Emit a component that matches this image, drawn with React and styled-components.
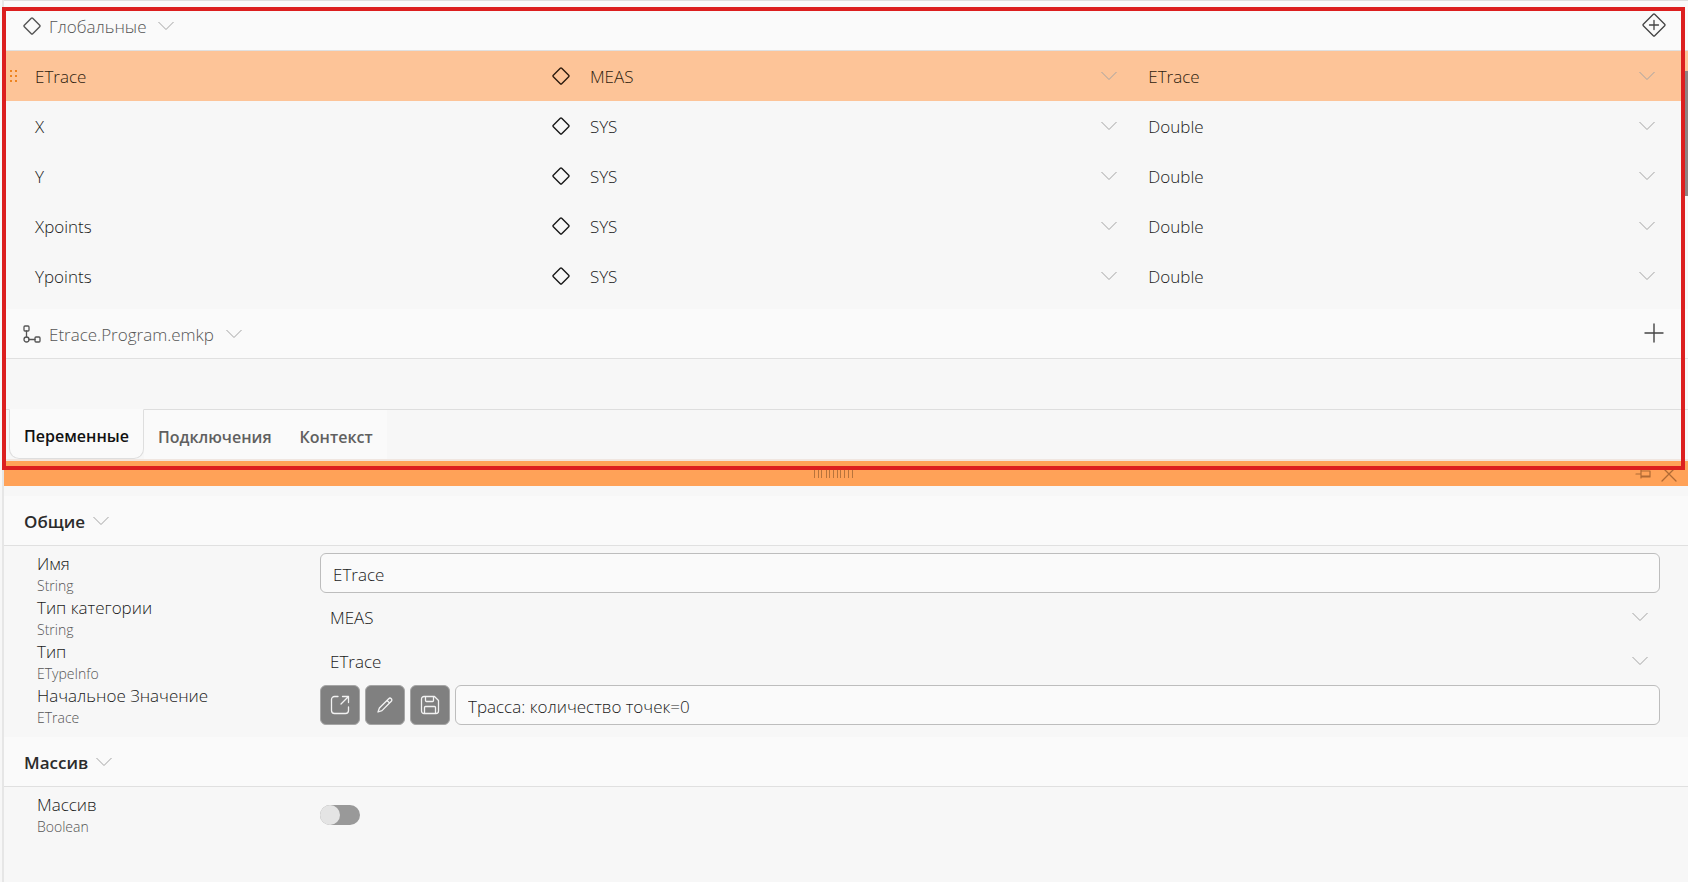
import React, { useState } from 'react';
import styled, { createGlobalStyle, css } from 'styled-components';

const GlobalStyle = createGlobalStyle`
  * {
    box-sizing: border-box;
  }
  body {
    margin: 0;
    background: #f7f7f7;
    color: #1a1a1a;
    font-family: 'Open Sans', 'Noto Sans', sans-serif;
    font-size: 17px;
    font-weight: 300;
    line-height: 24px;
  }
  button, input, select {
    font: inherit;
    color: inherit;
  }
`;

const Shell = styled.div`
  min-height: 100vh;
  margin-left: 2px;
  border-left: 2px solid #e6e6e6;
`;

const TopPanel = styled.section`
  position: relative;
  border-top: 1px solid #dedede;
`;

// annotation frame drawn over the variables panel and the splitter
const Highlight = styled.div`
  position: absolute;
  top: 6px;
  right: 3px;
  bottom: -9px;
  left: -2px;
  z-index: 2;
  border: 4px solid #dc1f1f;
  pointer-events: none;
`;

const ScrollThumb = styled.div`
  position: absolute;
  top: 70px;
  right: 0;
  width: 3px;
  height: 125px;
  background: #8f8282;
`;

const GroupHeader = styled.header`
  display: flex;
  align-items: center;
  justify-content: space-between;
  height: 50px;
  padding: 0 22px 0 19px;
  background: #fafafa;
  border-bottom: 1px solid #e0e0e0;
`;

const GroupToggle = styled.button`
  display: flex;
  align-items: center;
  padding: 0;
  border: 0;
  background: none;
  color: ${(props) => (props.$strong ? '#2b2b2b' : '#555')};
  font-weight: ${(props) => (props.$strong ? 600 : 300)};
  cursor: pointer;

  span {
    margin: ${(props) => (props.$strong ? '2px 8px 0 1px' : '2px 12px 0 8px')};
  }
`;

const IconButton = styled.button`
  display: flex;
  justify-content: center;
  padding: 0;
  border: 0;
  background: none;
  color: #444;
  cursor: pointer;

  ${GroupHeader} & {
    width: 24px;
    margin-bottom: 2px;
  }
`;

const VariableTable = styled.table`
  width: 100%;
  margin-bottom: 8px;
  border-collapse: collapse;
  table-layout: fixed;

  td {
    height: 50px;
    padding: 0;
  }
`;

const VariableRow = styled.tr`
  ${(props) =>
    props.$selected &&
    css`
      background: #fdc498;
      color: #2e1c0e;
    `}
`;

const NameCell = styled.div`
  display: flex;
  align-items: center;
  gap: 17px;
  padding: 2px 0 0 5px;

  svg {
    margin-bottom: 2px;
    visibility: ${(props) => (props.$selected ? 'visible' : 'hidden')};
  }
`;

const CategoryCell = styled.div`
  display: flex;
  align-items: center;
  padding: 0 15px 0 9px;
`;

const TypeCell = styled.div`
  display: flex;
  padding: 0 33px 0 0;
`;

const SelectBox = styled.div`
  display: grid;
  flex: 1;
  align-items: center;

  > * {
    grid-area: 1 / 1;
  }
  > svg {
    justify-self: end;
    pointer-events: none;
  }
`;

const Select = styled.select`
  width: 100%;
  height: 40px;
  padding: 2px 24px 0 ${(props) => props.$indent}px;
  appearance: none;
  border: 0;
  background: none;
  cursor: pointer;
`;

const EmptyArea = styled.div`
  height: 50px;
`;

const TabBar = styled.nav`
  display: flex;
  height: 52px;
  padding-left: 5px;
  border-top: 1px solid #dedede;
  border-bottom: 2px solid #f0e6e0;
`;

const Tab = styled.button`
  padding: 4px 14px 0;
  margin-top: -1px;
  border: 0;
  border-top: 1px solid #dedede;
  background: #fafafa;
  color: #606060;
  font-size: 16px;
  font-weight: 600;
  cursor: pointer;
  ${(props) =>
    props.$active &&
    css`
      border: 1px solid #dedede;
      border-top-color: #fafafa;
      border-radius: 0 0 10px 10px;
      color: #111;
    `}
`;

const Splitter = styled.div`
  display: grid;
  grid-template-columns: 1fr auto 1fr;
  align-items: center;
  height: 25px;
  padding-right: 11px;
  background: #ffa258;

  > svg {
    margin: 0 14px 2px 0;
  }
`;

const SplitterActions = styled.div`
  display: flex;
  align-items: center;
  justify-content: flex-end;
  gap: 10px;

  button {
    color: #b06a35;
  }
`;

const Properties = styled.section`
  padding-top: 10px;
`;

const PropertyList = styled.div`
  padding: 5px 28px 10px 33px;
`;

const PropertyRow = styled.div`
  display: grid;
  grid-template: 44px / 283px 1fr;
  align-items: center;
`;

const PropertyLabel = styled.label`
  display: block;
  padding-top: 2px;

  small {
    display: block;
    color: #555;
    font-size: 14px;
    line-height: 20px;
  }
`;

const PropertyValue = styled.div`
  display: flex;
  gap: 5px;

  ${SelectBox} {
    padding-right: 12px;
  }
`;

const TextInput = styled.input`
  flex: 1;
  min-width: 0;
  height: 40px;
  padding: 2px 12px 0;
  border: 1px solid #bdbdbd;
  border-radius: 6px;
  background: #fafafa;
`;

const ToolButton = styled.button`
  display: flex;
  align-items: center;
  justify-content: center;
  width: 40px;
  height: 40px;
  padding: 0;
  border: 1px solid #a6a6a6;
  border-radius: 6px;
  background: #808080;
  color: #f2f2f2;
  cursor: pointer;
`;

const Switch = styled.input`
  width: 40px;
  height: 20px;
  margin: 2px 0 0;
  appearance: none;
  border-radius: 10px;
  background: #999;
  cursor: pointer;

  &::before {
    content: '';
    display: block;
    width: 20px;
    height: 20px;
    border-radius: 50%;
    background: #e4e4e4;
  }
  &:checked::before {
    margin-left: 20px;
  }
`;

const Svg = ({ w = 20, h = w, sw = 1, children }) => (
  <svg
    width={w}
    height={h}
    viewBox={`0 0 ${w} ${h}`}
    fill="none"
    stroke="currentColor"
    strokeWidth={sw}
    strokeLinecap="round"
    strokeLinejoin="round"
    aria-hidden="true"
  >
    {children}
  </svg>
);

const Chevron = () => (
  <svg width="16" height="10" viewBox="0 0 16 10" fill="none" stroke="#a3a3a3" aria-hidden="true">
    <path d="M.5 1 8 8.5 15.5 1" />
  </svg>
);

const Diamond = () => (
  <Svg w={18} sw={1.4}>
    <path d="M8.3 1.3 1.3 8.3q-.7.7 0 1.4l7 7q.7.7 1.4 0l7-7q.7-.7 0-1.4l-7-7q-.7-.7-1.4 0Z" />
  </Svg>
);

const DiamondPlus = () => (
  <Svg w={24} sw={1.3}>
    <path d="M11.3 1.3 1.3 11.3q-.7.7 0 1.4l10 10q.7.7 1.4 0l10-10q.7-.7 0-1.4l-10-10q-.7-.7-1.4 0ZM12 7.5v9M7.5 12h9" />
  </Svg>
);

const Plus = () => (
  <Svg w={20} sw={1.4}>
    <path d="M10 1v18M1 10h18" />
  </Svg>
);

const Flow = () => (
  <Svg w={18} sw={1.3}>
    <rect x="1" y="1" width="5" height="5" rx="1" />
    <rect x="12" y="12" width="5" height="5" rx="1" />
    <circle cx="3.5" cy="14.5" r="2.5" />
    <path d="M3.5 6v6M6 14.5h6" />
  </Svg>
);

const Grip = () => (
  <svg width="9" height="14" viewBox="0 0 9 14" fill="#ee8420" aria-hidden="true">
    {[1, 6, 11].map((y) => (
      <g key={y}>
        <rect x="1" y={y} width="2" height="2" />
        <rect x="6" y={y} width="2" height="2" />
      </g>
    ))}
  </svg>
);

const SplitterGrip = () => (
  <svg width="40" height="10" viewBox="0 0 40 10" stroke="#b8743c" aria-hidden="true">
    {[0, 4, 7, 12, 15, 19, 23, 26, 30, 34, 38].map((x) => (
      <path key={x} d={`M${x}.5 0v10`} />
    ))}
  </svg>
);

const Pin = () => (
  <Svg w={16} h={10} sw={1.2}>
    <path d="M1 5h5M6 1v8M6 2h9v6H6M6 7h9" />
  </Svg>
);

const Close = () => (
  <Svg w={16} sw={1.3}>
    <path d="m1 1 14 14M15 1 1 15" />
  </Svg>
);

const OpenIcon = () => (
  <Svg w={20} sw={1.3}>
    <path d="M8 1.5H4.5a3 3 0 0 0-3 3v11a3 3 0 0 0 3 3h11a3 3 0 0 0 3-3V12M12.5 1.5h6v6M18.5 1.5 11 9" />
  </Svg>
);

const PencilIcon = () => (
  <Svg w={18} sw={1.3}>
    <path d="m2 16 1.4-4 9.3-9.3a1.8 1.8 0 0 1 2.6 2.6L6 14.6ZM11 4.4 13.6 7" />
  </Svg>
);

const SaveIcon = () => (
  <Svg w={20} sw={1.3}>
    <path d="M4 1.5h10.5l4 4V16a2.5 2.5 0 0 1-2.5 2.5H4A2.5 2.5 0 0 1 1.5 16V4A2.5 2.5 0 0 1 4 1.5ZM5.5 1.5v4a1 1 0 0 0 1 1h6a1 1 0 0 0 1-1v-4M4.5 18.5v-6a1 1 0 0 1 1-1h9a1 1 0 0 1 1 1v6" />
  </Svg>
);

const categories = ['MEAS', 'SYS'];
const types = ['ETrace', 'Double'];

const initialVariables = [
  { name: 'ETrace', category: 'MEAS', type: 'ETrace' },
  { name: 'X', category: 'SYS', type: 'Double' },
  { name: 'Y', category: 'SYS', type: 'Double' },
  { name: 'Xpoints', category: 'SYS', type: 'Double' },
  { name: 'Ypoints', category: 'SYS', type: 'Double' },
];

const tabs = ['Переменные', 'Подключения', 'Контекст'];

function Dropdown({ id, label, value, options, indent, onChange }) {
  return (
    <SelectBox>
      <Select
        id={id}
        aria-label={label}
        $indent={indent}
        value={value}
        onChange={(e) => onChange(e.target.value)}
      >
        {options.map((option) => (
          <option key={option}>{option}</option>
        ))}
      </Select>
      <Chevron />
    </SelectBox>
  );
}

function Group({ icon, title, strong, action, children }) {
  const [open, setOpen] = useState(true);
  return (
    <>
      <GroupHeader>
        <GroupToggle $strong={strong} aria-expanded={open} onClick={() => setOpen(!open)}>
          {icon}
          <span>{title}</span>
          <Chevron />
        </GroupToggle>
        {action}
      </GroupHeader>
      {open && children}
    </>
  );
}

function Property({ id, name, type, children }) {
  return (
    <PropertyRow>
      <PropertyLabel htmlFor={id}>
        {name}
        <small>{type}</small>
      </PropertyLabel>
      <PropertyValue>{children}</PropertyValue>
    </PropertyRow>
  );
}

export default function App() {
  const [variables, setVariables] = useState(initialVariables);
  const [selected, setSelected] = useState(0);
  const [tab, setTab] = useState(tabs[0]);
  const [trace, setTrace] = useState('Трасса: количество точек=0');
  const current = variables[selected];

  const update = (index, patch) => {
    setVariables(variables.map((item, i) => (i === index ? { ...item, ...patch } : item)));
  };

  return (
    <Shell>
      <GlobalStyle />
      <TopPanel>
        <Group
          icon={<Diamond />}
          title="Глобальные"
          action={
            <IconButton aria-label="Добавить переменную">
              <DiamondPlus />
            </IconButton>
          }
        >
          <VariableTable>
            <colgroup>
              <col width="32%" />
              <col width="35%" />
              <col />
            </colgroup>
            <tbody>
              {variables.map((item, i) => (
                <VariableRow key={i} $selected={i === selected} onClick={() => setSelected(i)}>
                  <td>
                    <NameCell $selected={i === selected}>
                      <Grip />
                      {item.name}
                    </NameCell>
                  </td>
                  <td>
                    <CategoryCell>
                      <Diamond />
                      <Dropdown
                        label="Тип категории"
                        indent={20}
                        value={item.category}
                        options={categories}
                        onChange={(category) => update(i, { category })}
                      />
                    </CategoryCell>
                  </td>
                  <td>
                    <TypeCell>
                      <Dropdown
                        label="Тип"
                        indent={16}
                        value={item.type}
                        options={types}
                        onChange={(type) => update(i, { type })}
                      />
                    </TypeCell>
                  </td>
                </VariableRow>
              ))}
            </tbody>
          </VariableTable>
        </Group>
        <Group
          icon={<Flow />}
          title="Etrace.Program.emkp"
          action={
            <IconButton aria-label="Добавить">
              <Plus />
            </IconButton>
          }
        >
          <EmptyArea />
        </Group>
        <TabBar>
          {tabs.map((name) => (
            <Tab key={name} $active={name === tab} onClick={() => setTab(name)}>
              {name}
            </Tab>
          ))}
        </TabBar>
        <ScrollThumb />
        <Highlight />
      </TopPanel>
      <Splitter>
        <span />
        <SplitterGrip />
        <SplitterActions>
          <IconButton aria-label="Закрепить">
            <Pin />
          </IconButton>
          <IconButton aria-label="Закрыть">
            <Close />
          </IconButton>
        </SplitterActions>
      </Splitter>
      <Properties>
        <Group title="Общие" strong>
          <PropertyList>
            <Property id="name" name="Имя" type="String">
              <TextInput
                id="name"
                value={current.name}
                onChange={(e) => update(selected, { name: e.target.value })}
              />
            </Property>
            <Property id="category" name="Тип категории" type="String">
              <Dropdown
                id="category"
                indent={10}
                value={current.category}
                options={categories}
                onChange={(category) => update(selected, { category })}
              />
            </Property>
            <Property id="type" name="Тип" type="ETypeInfo">
              <Dropdown
                id="type"
                indent={10}
                value={current.type}
                options={types}
                onChange={(type) => update(selected, { type })}
              />
            </Property>
            <Property id="initial" name="Начальное Значение" type="ETrace">
              <ToolButton aria-label="Открыть">
                <OpenIcon />
              </ToolButton>
              <ToolButton aria-label="Изменить">
                <PencilIcon />
              </ToolButton>
              <ToolButton aria-label="Сохранить">
                <SaveIcon />
              </ToolButton>
              <TextInput id="initial" value={trace} onChange={(e) => setTrace(e.target.value)} />
            </Property>
          </PropertyList>
        </Group>
        <Group title="Массив" strong>
          <PropertyList>
            <Property id="array" name="Массив" type="Boolean">
              <Switch id="array" type="checkbox" role="switch" />
            </Property>
          </PropertyList>
        </Group>
      </Properties>
    </Shell>
  );
}
